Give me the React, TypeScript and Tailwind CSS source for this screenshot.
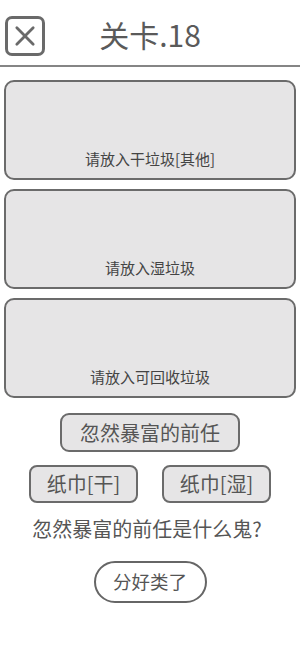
export default function App() {
  const bins = ['请放入干垃圾[其他]', '请放入湿垃圾', '请放入可回收垃圾'];

  return (
    <div
      className="w-[300px] h-[649px] bg-white text-[#4d4d4d] overflow-hidden"
      style={{ fontFamily: '"Noto Sans CJK SC", "Noto Sans", sans-serif' }}
    >
      {/* Header */}
      <div className="h-[67px] border-b-2 border-[#858585] grid grid-cols-[1fr_auto_1fr] items-start pt-[16px]">
        <div className="pl-[5px]">
          <div className="w-[40px] h-[40px] border-[3px] border-[#6a6a6a] rounded-[7px] flex items-center justify-center">
            <svg viewBox="0 0 24 24" className="w-[28px] h-[28px]" fill="none" stroke="#6a6a6a" strokeWidth="2.4" strokeLinecap="round">
              <path d="M5 5 L19 19" />
              <path d="M19 5 L5 19" />
            </svg>
          </div>
        </div>
        <div className="text-[30px] leading-[36px] text-[#5a5a5a]">关卡.18</div>
        <div />
      </div>

      {/* Bins */}
      <div className="mt-[13px] px-[4px] flex flex-col gap-[9px]">
        {bins.map((b) => (
          <div
            key={b}
            className="h-[100px] bg-[#e6e5e6] border-2 border-[#6b6b6b] rounded-[10px] flex items-end justify-center pb-[9px]"
          >
            <span className="text-[15px] leading-[20px] text-[#444]">{b}</span>
          </div>
        ))}
      </div>

      {/* Items */}
      <div className="mt-[15px] flex justify-center">
        <div className="w-[180px] h-[39px] bg-[#e6e5e6] border-2 border-[#6b6b6b] rounded-[9px] flex items-center justify-center text-[20px] text-[#555]">
          忽然暴富的前任
        </div>
      </div>

      <div className="mt-[13px] flex justify-center gap-[24px]">
        <div className="w-[109px] h-[38px] bg-[#e6e5e6] border-2 border-[#6b6b6b] rounded-[8px] flex items-center justify-center text-[20px] text-[#555]">
          纸巾[干]
        </div>
        <div className="w-[109px] h-[38px] bg-[#e6e5e6] border-2 border-[#6b6b6b] rounded-[8px] flex items-center justify-center text-[20px] text-[#555]">
          纸巾[湿]
        </div>
      </div>

      <div className="mt-[12px] text-center text-[20px] leading-[28px] text-[#555] pr-[6px]">
        忽然暴富的前任是什么鬼?
      </div>

      <div className="mt-[18px] flex justify-center">
        <div className="w-[113px] h-[42px] border-2 border-[#666] rounded-full flex items-center justify-center text-[18.5px] text-[#555] bg-white">
          分好类了
        </div>
      </div>
    </div>
  );
}
